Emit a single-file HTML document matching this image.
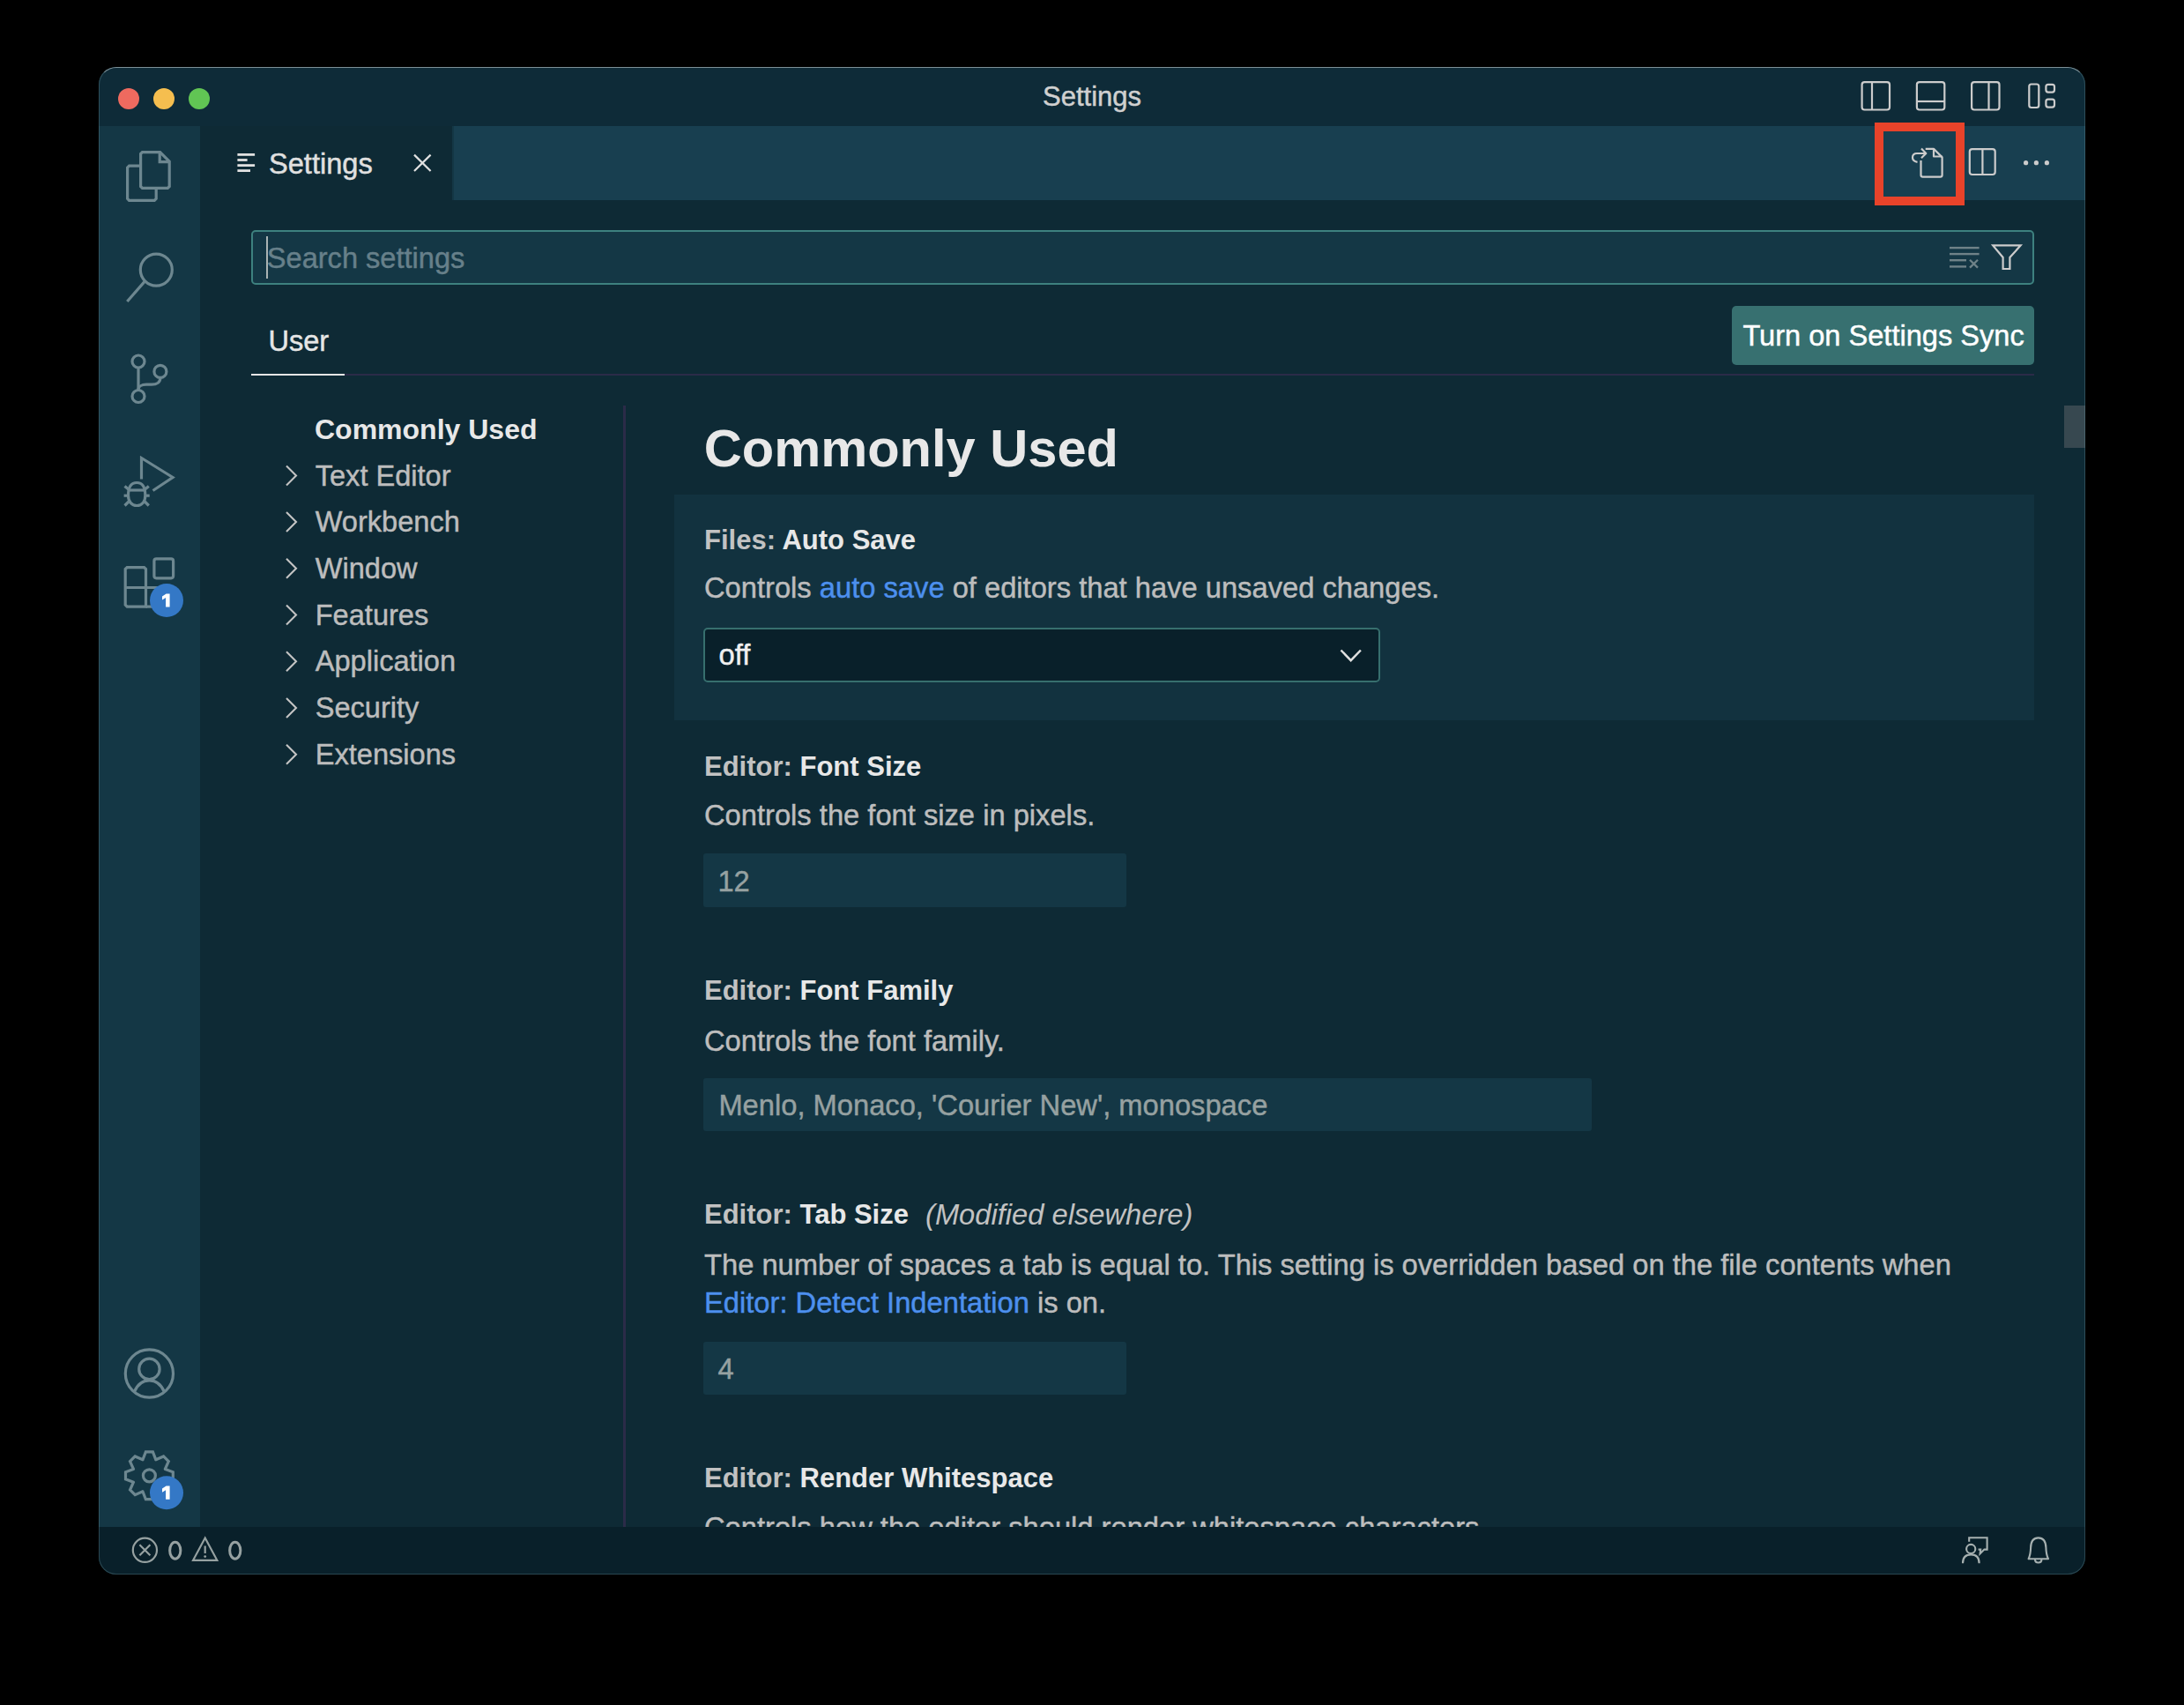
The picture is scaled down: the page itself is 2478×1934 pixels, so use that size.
<!DOCTYPE html>
<html><head><meta charset="utf-8"><title>Settings</title><style>
html,body{margin:0;padding:0;background:#000;width:2478px;height:1934px;overflow:hidden}
.win{position:absolute;left:112px;top:76px;width:2254px;height:1710px;border-radius:20px;overflow:hidden;background:#0e2a35}
.t{position:absolute;white-space:nowrap;font-family:"Liberation Sans",sans-serif}
.r{position:absolute}
.frame{position:absolute;left:112px;top:76px;width:2254px;height:1710px;border-radius:20px;box-sizing:border-box;border:1px solid rgba(120,160,170,0.30);border-top-color:rgba(200,212,216,0.6);pointer-events:none}
svg{position:absolute;left:0;top:0}
</style></head><body>
<div class="win">
<div class="r" style="left:0.00px;top:0.00px;width:2254.00px;height:67.00px;background:#0e2b38;"></div>
<div class="r" style="left:0.00px;top:67.00px;width:115.00px;height:1589.00px;background:#143745;"></div>
<div class="r" style="left:115.00px;top:67.00px;width:2139.00px;height:1589.00px;background:#0e2a35;"></div>
<div class="r" style="left:401.00px;top:67.00px;width:1853.00px;height:84.00px;background:#183f50;"></div>
<div class="r" style="left:401.00px;top:67.00px;width:2.00px;height:84.00px;background:#143745;"></div>
<div class="r" style="left:0.00px;top:1656.00px;width:2254.00px;height:54.00px;background:#09202a;"></div>
<div class="t" style="-webkit-text-stroke:0.45px currentColor;left:1071.00px;top:18.35px;font-size:31px;line-height:31px;color:#d0d0d0;font-weight:normal;font-style:normal;">Settings</div>
<div class="t" style="-webkit-text-stroke:0.45px currentColor;left:193.00px;top:93.90px;font-size:32.6px;line-height:32.6px;color:#e0e0e0;font-weight:normal;font-style:normal;">Settings</div>
<div class="r" style="left:173.00px;top:185.00px;width:2022.70px;height:62.00px;background:#143745;border:2px solid #3d817f;box-sizing:border-box;border-radius:5px"></div>
<div class="r" style="left:190.00px;top:192.00px;width:2.00px;height:48.00px;background:#aab4b4;"></div>
<div class="t" style="-webkit-text-stroke:0.45px currentColor;left:190.80px;top:200.90px;font-size:32.6px;line-height:32.6px;color:#67808a;font-weight:normal;font-style:normal;">Search settings</div>
<div class="t" style="-webkit-text-stroke:0.45px currentColor;left:192.40px;top:295.00px;font-size:32.6px;line-height:32.6px;color:#e6e6e6;font-weight:normal;font-style:normal;">User</div>
<div class="r" style="left:173.00px;top:348.00px;width:2023.00px;height:2.00px;background:#2b2b48;"></div>
<div class="r" style="left:173.00px;top:348.00px;width:106.00px;height:2.00px;background:#e6e6e6;"></div>
<div class="r" style="left:1853.20px;top:271.00px;width:342.80px;height:67.00px;background:#377070;border-radius:5px"></div>
<div class="t" style="-webkit-text-stroke:0.45px currentColor;left:1865.40px;top:289.40px;font-size:32.6px;line-height:32.6px;color:#ffffff;font-weight:normal;font-style:normal;">Turn on Settings Sync</div>
<div class="t" style="left:245.00px;top:394.61px;font-size:32px;line-height:32px;color:#e8e8e8;font-weight:bold;font-style:normal;">Commonly Used</div>
<div class="t" style="-webkit-text-stroke:0.45px currentColor;left:245.70px;top:447.60px;font-size:32.6px;line-height:32.6px;color:#bdbdbd;font-weight:normal;font-style:normal;">Text Editor</div>
<div class="t" style="-webkit-text-stroke:0.45px currentColor;left:245.70px;top:500.32px;font-size:32.6px;line-height:32.6px;color:#bdbdbd;font-weight:normal;font-style:normal;">Workbench</div>
<div class="t" style="-webkit-text-stroke:0.45px currentColor;left:245.70px;top:553.04px;font-size:32.6px;line-height:32.6px;color:#bdbdbd;font-weight:normal;font-style:normal;">Window</div>
<div class="t" style="-webkit-text-stroke:0.45px currentColor;left:245.70px;top:605.76px;font-size:32.6px;line-height:32.6px;color:#bdbdbd;font-weight:normal;font-style:normal;">Features</div>
<div class="t" style="-webkit-text-stroke:0.45px currentColor;left:245.70px;top:658.48px;font-size:32.6px;line-height:32.6px;color:#bdbdbd;font-weight:normal;font-style:normal;">Application</div>
<div class="t" style="-webkit-text-stroke:0.45px currentColor;left:245.70px;top:711.20px;font-size:32.6px;line-height:32.6px;color:#bdbdbd;font-weight:normal;font-style:normal;">Security</div>
<div class="t" style="-webkit-text-stroke:0.45px currentColor;left:245.70px;top:763.92px;font-size:32.6px;line-height:32.6px;color:#bdbdbd;font-weight:normal;font-style:normal;">Extensions</div>
<div class="r" style="left:595.00px;top:384.00px;width:3.00px;height:1272.00px;background:#2b2b48;"></div>
<div class="r" style="left:2230.00px;top:384.00px;width:24.00px;height:48.00px;background:#374850;"></div>
<div class="t" style="left:686.80px;top:403.14px;font-size:59.6px;line-height:59.6px;color:#e8e8e8;font-weight:bold;font-style:normal;">Commonly Used</div>
<div class="r" style="left:653.00px;top:484.50px;width:1543.00px;height:256.00px;background:#12323f;"></div>

<div class="t" style="left:687.00px;top:521.25px;font-size:31px;line-height:31px;color:#e8e8e8;font-weight:bold;font-style:normal;"><span style="color:#c2c2c2">Files:</span> <span style="color:#e8e8e8">Auto Save</span></div>
<div class="t" style="-webkit-text-stroke:0.45px currentColor;left:687.00px;top:575.41px;font-size:32.7px;line-height:32.7px;color:#bdbdbd;font-weight:normal;font-style:normal;">Controls <span style="color:#4d90ee">auto save</span> of editors that have unsaved changes.</div>
<div class="r" style="left:686.30px;top:636.00px;width:767.30px;height:62.00px;background:#09202a;border:2px solid #376f6e;box-sizing:border-box;border-radius:5px"></div>
<div class="t" style="-webkit-text-stroke:0.45px currentColor;left:703.60px;top:650.81px;font-size:32.7px;line-height:32.7px;color:#f0f0f0;font-weight:normal;font-style:normal;">off</div>

<div class="t" style="left:687.00px;top:777.65px;font-size:31px;line-height:31px;color:#e8e8e8;font-weight:bold;font-style:normal;"><span style="color:#c2c2c2">Editor:</span> <span style="color:#e8e8e8">Font Size</span></div>
<div class="t" style="-webkit-text-stroke:0.45px currentColor;left:687.00px;top:833.31px;font-size:32.7px;line-height:32.7px;color:#bdbdbd;font-weight:normal;font-style:normal;">Controls the font size in pixels.</div>
<div class="r" style="left:685.80px;top:892.00px;width:480.00px;height:61.00px;background:#143745;border-radius:3px"></div>
<div class="t" style="-webkit-text-stroke:0.45px currentColor;left:702.40px;top:907.81px;font-size:32.7px;line-height:32.7px;color:#96a1a1;font-weight:normal;font-style:normal;">12</div>

<div class="t" style="left:687.00px;top:1031.95px;font-size:31px;line-height:31px;color:#e8e8e8;font-weight:bold;font-style:normal;"><span style="color:#c2c2c2">Editor:</span> <span style="color:#e8e8e8">Font Family</span></div>
<div class="t" style="-webkit-text-stroke:0.45px currentColor;left:687.00px;top:1088.51px;font-size:32.7px;line-height:32.7px;color:#bdbdbd;font-weight:normal;font-style:normal;">Controls the font family.</div>
<div class="r" style="left:685.80px;top:1146.80px;width:1008.20px;height:60.50px;background:#143745;border-radius:3px"></div>
<div class="t" style="-webkit-text-stroke:0.45px currentColor;left:703.40px;top:1161.61px;font-size:32.7px;line-height:32.7px;color:#96a1a1;font-weight:normal;font-style:normal;">Menlo, Monaco, 'Courier New', monospace</div>

<div class="t" style="left:687.00px;top:1286.25px;font-size:31px;line-height:31px;color:#e8e8e8;font-weight:bold;font-style:normal;"><span style="color:#c2c2c2">Editor:</span> <span style="color:#e8e8e8">Tab Size</span><span style="font-weight:normal;font-style:italic;color:#c2c2c2;font-size:32.7px;position:absolute;left:251px">(Modified elsewhere)</span></div>
<div class="t" style="-webkit-text-stroke:0.45px currentColor;left:687.00px;top:1342.51px;font-size:32.7px;line-height:32.7px;color:#bdbdbd;font-weight:normal;font-style:normal;">The number of spaces a tab is equal to. This setting is overridden based on the file contents when</div>
<div class="t" style="-webkit-text-stroke:0.45px currentColor;left:687.00px;top:1385.91px;font-size:32.7px;line-height:32.7px;color:#bdbdbd;font-weight:normal;font-style:normal;"><span style="color:#4d90ee">Editor: Detect Indentation</span> is on.</div>
<div class="r" style="left:685.80px;top:1446.00px;width:480.10px;height:59.80px;background:#143745;border-radius:3px"></div>
<div class="t" style="-webkit-text-stroke:0.45px currentColor;left:702.60px;top:1461.01px;font-size:32.7px;line-height:32.7px;color:#96a1a1;font-weight:normal;font-style:normal;">4</div>

<div class="t" style="left:687.00px;top:1585.05px;font-size:31px;line-height:31px;color:#e8e8e8;font-weight:bold;font-style:normal;"><span style="color:#c2c2c2">Editor:</span> <span style="color:#e8e8e8">Render Whitespace</span></div>
<div class="t" style="-webkit-text-stroke:0.45px currentColor;left:687.00px;top:1640.51px;font-size:32.7px;line-height:32.7px;color:#bdbdbd;font-weight:normal;font-style:normal;">Controls how the editor should render whitespace characters.</div>
<div class="r" style="left:0.00px;top:1656.00px;width:2254.00px;height:54.00px;background:#09202a;"></div>
</div>
<div class="frame"></div>
<svg width="2478" height="1934" viewBox="0 0 2478 1934">
<circle cx="146" cy="112" r="12" fill="#ee6a5f"/>
<circle cx="186" cy="112" r="12" fill="#f5be4f"/>
<circle cx="226" cy="112" r="12" fill="#61c554"/>
<g fill="none" stroke="#cccccc" stroke-width="2.2"><rect x="2112.6" y="93.1" width="31.4" height="31.4" rx="3"/><line x1="2124" y1="93" x2="2124" y2="124.5"/><rect x="2174.9" y="93.1" width="31.4" height="31.4" rx="3"/><line x1="2175" y1="115" x2="2206" y2="115"/><rect x="2237.1" y="93.1" width="31.4" height="31.4" rx="3"/><line x1="2256.5" y1="93" x2="2256.5" y2="124.5"/><rect x="2302.3" y="95.5" width="11" height="26.5" rx="2.5"/><rect x="2321.4" y="95.8" width="9.6" height="8.8" rx="2.5"/><rect x="2321.4" y="112.7" width="9.6" height="8.9" rx="2.5"/></g>
<rect x="269.4" y="174" width="19.7" height="2.8" fill="#e0e0e0"/>
<rect x="269.4" y="180.1" width="11.2" height="2.8" fill="#e0e0e0"/>
<rect x="269.4" y="186.2" width="19.7" height="2.8" fill="#e0e0e0"/>
<rect x="269.4" y="192.2" width="14.6" height="2.8" fill="#e0e0e0"/>
<path d="M470,175.6 L488.6,194 M488.6,175.6 L470,194" stroke="#e0e0e0" stroke-width="2.2" fill="none"/>
<g fill="none" stroke="#cccccc" stroke-width="2.2" stroke-linejoin="round"><path d="M2184.7,168.8 L2194,168.8 L2203.6,178.4 L2203.6,198.5 Q2203.6,200.6 2201.5,200.6 L2181.6,200.6 Q2179.5,200.6 2179.5,198.5 L2179.5,182"/><path d="M2194,168.8 L2194,177.5 L2203.6,177.5"/><path d="M2175.5,183.8 Q2170,183 2170,178.8 Q2170,174 2175,174 L2184.5,174"/><path d="M2180,168.6 L2185.3,174 L2180,179.2"/><rect x="2234.8" y="169.1" width="28.9" height="28.9" rx="3"/><line x1="2249.4" y1="169" x2="2249.4" y2="198"/></g>
<circle cx="2298.6" cy="184.7" r="2.6" fill="#cccccc"/>
<circle cx="2310.4" cy="184.7" r="2.6" fill="#cccccc"/>
<circle cx="2322.4" cy="184.7" r="2.6" fill="#cccccc"/>
<rect x="2132" y="144" width="92" height="84" fill="none" stroke="#e8432a" stroke-width="10"/>
<g fill="none" stroke="#6d8790" stroke-width="3.2" stroke-linejoin="miter"><path d="M158,188.2 L146.5,188.2 L144.6,190.1 L144.6,225.4 L146.5,227.3 L175.3,227.3 L177.2,225.4 L177.2,214"/><path d="M161.5,172.6 L181.6,172.6 L192.2,183.2 L192.2,211.5 L190.3,213.4 L161.5,213.4 L159.6,211.5 L159.6,174.5 Z"/><path d="M181.2,173 L181.2,183.6 L191.8,183.6"/><circle cx="177.3" cy="306.1" r="18"/><line x1="164.5" y1="318.9" x2="144.3" y2="342"/><circle cx="157" cy="410" r="7"/><circle cx="181.9" cy="421.4" r="7"/><circle cx="157" cy="449.5" r="7"/><line x1="157" y1="417" x2="157" y2="442.5"/><path d="M181.9,428.4 C181.9,433.5 178,436.2 172,436.2 L166,436.2 C160.5,436.2 157,438.5 157,442"/><path d="M160.5,543.5 L160.5,519.5 L196,541.5 L173.5,556.5"/><path d="M145.5,562 C145.5,552 149.5,547.5 155.2,547.5 C161,547.5 164.8,552 164.8,562 C164.8,569 161,573.5 155.2,573.5 C149.5,573.5 145.5,569 145.5,562 Z"/><line x1="140.6" y1="562.2" x2="145.5" y2="562.2"/><line x1="164.8" y1="562.2" x2="169.7" y2="562.2"/><line x1="141.5" y1="551.5" x2="147.5" y2="556.5"/><line x1="168.8" y1="551.5" x2="162.8" y2="556.5"/><line x1="141.5" y1="573.5" x2="147.5" y2="567.5"/><line x1="168.8" y1="573.5" x2="162.8" y2="567.5"/><line x1="147" y1="556" x2="163.5" y2="556"/><path d="M142.2,666.5 L142.2,645.5 L144.2,643.6 L163.5,643.6 L165.5,645.5 L165.5,688.1 L144.2,688.1 L142.2,686.1 L142.2,666.5 L181,666.5"/><path d="M165.5,688.1 L182,688.1"/><rect x="174.9" y="633.9" width="21.7" height="21.9" rx="2.5"/><circle cx="169.4" cy="1558" r="27.1"/><circle cx="169.4" cy="1552.9" r="11.7"/><path d="M152.5,1578.5 Q158,1565.8 169.4,1565.8 Q180.8,1565.8 186.3,1578.5"/></g>
<polygon points="161.97,1655.77 165.38,1646.90 173.42,1646.90 176.83,1655.77 176.89,1655.80 185.58,1651.94 191.26,1657.62 187.40,1666.31 187.43,1666.37 196.30,1669.78 196.30,1677.82 187.43,1681.23 187.40,1681.29 191.26,1689.98 185.58,1695.66 176.89,1691.80 176.83,1691.83 173.42,1700.70 165.38,1700.70 161.97,1691.83 161.91,1691.80 153.22,1695.66 147.54,1689.98 151.40,1681.29 151.37,1681.23 142.50,1677.82 142.50,1669.78 151.37,1666.37 151.40,1666.31 147.54,1657.62 153.22,1651.94 161.91,1655.80" fill="none" stroke="#6d8790" stroke-width="3.2" stroke-linejoin="miter"/>
<circle cx="169.4" cy="1673.8" r="7" fill="none" stroke="#6d8790" stroke-width="3.2"/>
<circle cx="189" cy="681" r="19" fill="#3478c6"/>
<path d="M188.1,688.50 L192.6,688.50 L192.6,673.40 L188.6,673.40 L184,676.40 L184,680.60 L188.1,678.00 Z" fill="#ffffff"/>
<circle cx="189" cy="1693.2" r="19" fill="#3478c6"/>
<path d="M188.1,1700.70 L192.6,1700.70 L192.6,1685.60 L188.6,1685.60 L184,1688.60 L184,1692.80 L188.1,1690.20 Z" fill="#ffffff"/>
<g fill="#6f8288"><rect x="2212" y="279.9" width="33.6" height="2.4"/><rect x="2212" y="286.9" width="33.6" height="2.4"/><rect x="2212" y="294" width="19" height="2.4"/><rect x="2212" y="301.2" width="19" height="2.4"/></g><path d="M2235,294.8 L2244,303.6 M2244,294.8 L2235,303.6" stroke="#6f8288" stroke-width="2.3"/>
<path d="M2261.2,278.4 L2292.6,278.4 L2280.4,292 L2280.4,305 L2272.6,305 L2272.6,292 Z" fill="none" stroke="#cccccc" stroke-width="2.2"/>
<path d="M325,528.4 L336,539.4 L325,550.4" fill="none" stroke="#c4c4c4" stroke-width="2.1"/>
<path d="M325,581.1 L336,592.1 L325,603.1" fill="none" stroke="#c4c4c4" stroke-width="2.1"/>
<path d="M325,633.8 L336,644.8 L325,655.8" fill="none" stroke="#c4c4c4" stroke-width="2.1"/>
<path d="M325,686.6 L336,697.6 L325,708.6" fill="none" stroke="#c4c4c4" stroke-width="2.1"/>
<path d="M325,739.3 L336,750.3 L325,761.3" fill="none" stroke="#c4c4c4" stroke-width="2.1"/>
<path d="M325,792.0 L336,803.0 L325,814.0" fill="none" stroke="#c4c4c4" stroke-width="2.1"/>
<path d="M325,844.7 L336,855.7 L325,866.7" fill="none" stroke="#c4c4c4" stroke-width="2.1"/>
<path d="M1521.5,737.5 L1532.7,749.2 L1543.9,737.5" fill="none" stroke="#e0e0e0" stroke-width="2.5"/>
<g fill="none" stroke="#96a1a1" stroke-width="2.2"><circle cx="164.4" cy="1758.3" r="13.6"/><path d="M158.4,1752.3 L170.4,1764.3 M170.4,1752.3 L158.4,1764.3"/><path d="M232.7,1744.5 L246.3,1769.8 L219.1,1769.8 Z" stroke-linejoin="miter"/><line x1="232.7" y1="1753.5" x2="232.7" y2="1762"/></g><circle cx="232.7" cy="1765.6" r="1.4" fill="#96a1a1"/>
<ellipse cx="198.75" cy="1758.7" rx="6.1" ry="9.5" fill="none" stroke="#96a1a1" stroke-width="3"/>
<ellipse cx="266.75" cy="1758.7" rx="6.1" ry="9.5" fill="none" stroke="#96a1a1" stroke-width="3"/>
<g fill="none" stroke="#a6b0b0" stroke-width="2.1"><path d="M2234.2,1748.8 V1744.3 H2254.6 V1757.6 H2251.4 L2246.6,1762.4 L2247.2,1757.6 H2244.6"/><circle cx="2236.2" cy="1757" r="5.1"/><path d="M2227,1773.2 Q2227,1763.4 2236.3,1763.4 Q2245.6,1763.4 2245.6,1773.2"/><path d="M2301.6,1768.2 L2324,1768.2 Q2321.6,1763.5 2321.4,1755.5 Q2321,1744.4 2312.7,1744.4 Q2304.4,1744.4 2304.1,1755.5 Q2303.9,1763.5 2301.6,1768.2 Z" stroke-linejoin="round"/><path d="M2309,1769 Q2309,1772.5 2312.7,1772.5 Q2316.4,1772.5 2316.4,1769"/></g>
</svg>
</body></html>
